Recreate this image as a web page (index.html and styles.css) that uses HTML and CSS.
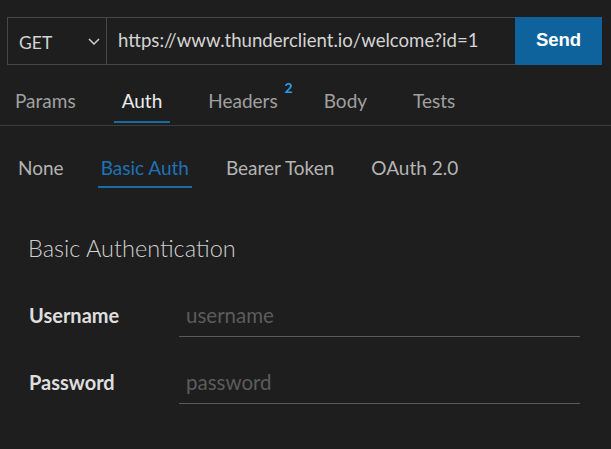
FILE: index.html
```html
<!DOCTYPE html>
<html lang="en">
<head>
<meta charset="utf-8">
<title>Thunder Client - Auth</title>
<link rel="stylesheet" href="styles.css">
</head>
<body>
  <div class="request-bar">
    <div class="request-group">
      <div class="method">
        <span class="method-text">GET</span>
        <svg class="chevron" width="12" height="7" viewBox="0 0 12 7"><path d="M1 1l5 5 5-5" fill="none" stroke="#cccccc" stroke-width="1.5"/></svg>
      </div>
      <div class="url">https://www.thunderclient.io/welcome?id=1</div>
    </div>
    <button class="send">Send</button>
  </div>

  <nav class="tabs">
    <span class="tab">Params</span>
    <span class="tab active">Auth</span>
    <span class="tab">Headers<sup class="count">2</sup></span>
    <span class="tab">Body</span>
    <span class="tab">Tests</span>
  </nav>

  <nav class="subtabs">
    <span class="subtab">None</span>
    <span class="subtab active">Basic Auth</span>
    <span class="subtab">Bearer Token</span>
    <span class="subtab">OAuth 2.0</span>
  </nav>

  <section class="auth-form">
    <h2 class="auth-title">Basic Authentication</h2>
    <div class="field">
      <label class="field-label" for="user">Username</label>
      <input class="field-input" id="user" type="text" placeholder="username">
    </div>
    <div class="field">
      <label class="field-label" for="pass">Password</label>
      <input class="field-input" id="pass" type="password" placeholder="password">
    </div>
  </section>
</body>
</html>
```

FILE: styles.css
```css
* { box-sizing: border-box; }

html, body {
  margin: 0;
  background: #1e1e1e;
  font-family: Lato, "Open Sans", sans-serif;
  color: #cccccc;
}

body {
  width: 611px;
  height: 449px;
  overflow: hidden;
}

.request-bar {
  display: flex;
  height: 48px;
  margin: 17px 9px 0 7px;
}

.request-group {
  flex: 1;
  display: flex;
  border: 1px solid #474747;
  border-right: none;
}

.method {
  width: 99px;
  display: flex;
  align-items: center;
  justify-content: space-between;
  padding: 2px 6px 0 11px;
  border-right: 1px solid #474747;
}

.method-text {
  font-size: 17.5px;
  color: #d4d4d4;
}

.chevron { margin-top: -2px; }

.url {
  flex: 1;
  display: flex;
  align-items: center;
  padding: 0 0 2px 11px;
  font-size: 18.6px;
  color: #d4d4d4;
  white-space: nowrap;
}

.send {
  width: 87px;
  height: 48px;
  border: none;
  background: #0e639c;
  color: #ffffff;
  font-family: "Liberation Sans", Arial, sans-serif;
  font-weight: bold;
  font-size: 18.5px;
  padding: 0 0 2px;
}

.tabs {
  display: flex;
  gap: 30px;
  padding: 0 0 2px 7px;
  border-bottom: 1px solid #3c3c3c;
}

.tab {
  position: relative;
  padding: 24px 8px 8px;
  line-height: 24px;
  font-size: 19px;
  color: #a0a0a0;
  border-bottom: 2px solid transparent;
}

.tab.active {
  color: #ececec;
  border-bottom-color: #1a6aa8;
}

.count {
  position: absolute;
  top: 16px;
  right: -7px;
  font-size: 14px;
  line-height: 14px;
  font-weight: bold;
  color: #2d9de8;
}

.subtabs {
  display: flex;
  gap: 31px;
  padding: 0 0 0 15px;
}

.subtab {
  padding: 30px 3px 7px;
  line-height: 23px;
  font-size: 19px;
  color: #b4b4b4;
  border-bottom: 2px solid transparent;
}

.subtab.active {
  color: #1f72b6;
  border-bottom-color: #1c6aa6;
}

.auth-form {
  padding: 0 31px 0 27px;
}

.auth-title {
  margin: 46px 0 38px;
  padding-left: 1px;
  font-size: 23.5px;
  font-weight: 300;
  line-height: 29px;
  color: #cfcfcf;
}

.field {
  display: flex;
  align-items: baseline;
  margin-bottom: 31px;
}

.field-label {
  width: 152px;
  padding-left: 2px;
  font-size: 20px;
  font-weight: bold;
  color: #dedede;
}

.field-input {
  flex: 1;
  height: 36px;
  padding: 0 7px 7px;
  border: none;
  border-bottom: 1px solid #5a5a5a;
  background: transparent;
  font-family: Lato, "Open Sans", sans-serif;
  font-size: 20.5px;
  color: #cccccc;
  outline: none;
}

.field-input::placeholder { color: #5c5c5c; }
```
